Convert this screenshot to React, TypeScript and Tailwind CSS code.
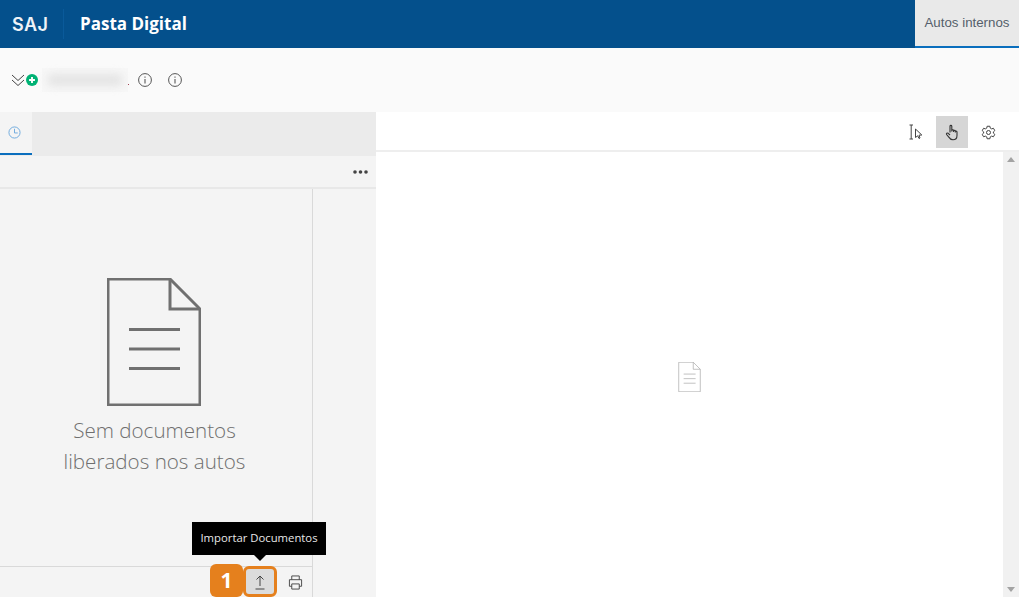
import React from "react";

function DocIcon({ className, sw, color }: { className: string; sw: number; color: string }) {
  return (
    <svg viewBox="0 0 94 128" className={className} fill="none" stroke={color} strokeWidth={sw}>
      <path d="M1 1 H63 L93 31 V127 H1 Z" strokeLinejoin="miter" />
      <path d="M63 1 V31 H93" />
      <path d="M22 51.5 H73 M22 71 H73 M22 90.5 H73" />
    </svg>
  );
}

function Info({ className }: { className?: string }) {
  return (
    <svg viewBox="0 0 14 14" className={className} fill="none" stroke="#555" strokeWidth="1">
      <circle cx="7" cy="7" r="6.4" />
      <path d="M7 6 V10.4" stroke="#666" strokeWidth="1.2" />
      <path d="M7 3.5 V4.8" stroke="#666" strokeWidth="1.2" />
    </svg>
  );
}

export default function App() {
  return (
    <div className="relative flex h-[597px] w-[1019px] flex-col overflow-hidden bg-white font-['Open_Sans','Noto_Sans',sans-serif]">
      <header className="flex h-12 items-stretch bg-[#04508c]">
        <div className="flex items-center pl-3 pr-[15px]">
          <span className="w-9 font-['Inter',sans-serif] text-[18px] font-semibold tracking-[0.4px] text-[#eef3f8]">SAJ</span>
        </div>
        <div className="my-[9px] w-px bg-[#0a5a9a]" />
        <div className="flex flex-1 items-center pl-4 pb-px">
          <span className="text-[17px] font-bold text-white">Pasta Digital</span>
        </div>
        <div className="flex w-[104px] items-center justify-center border-b-2 border-[#0a6ebd] bg-[#e9e9e9] font-['Liberation_Sans',sans-serif] text-[13.3px] text-[#555f6b]">
          Autos internos
        </div>
      </header>

      <div className="flex h-16 items-center bg-[#fafafa] pl-[11px]">
        <svg viewBox="0 0 14 14" className="h-[14px] w-[14px]" fill="none" stroke="#444" strokeWidth="1">
          <path d="M1 2 L7 7.5 L13 2 M1 7 L7 12.5 L13 7" />
        </svg>
        <svg viewBox="0 0 14 14" className="ml-px h-3 w-3">
          <circle cx="7" cy="7" r="7" fill="#00b274" />
          <path d="M7 3.6 V10.4 M3.6 7 H10.4" stroke="#fff" strokeWidth="2.2" />
        </svg>
        <div className="ml-1 flex h-6 w-[86px] items-center justify-center bg-[#f7f7f7]">
          <div className="h-[12px] w-[76px] rounded-full bg-[#e4e4e4] blur-[4px]" />
        </div>
        <span className="mt-2 h-px w-px self-center bg-[#a04050]" />
        <Info className="ml-[9px] h-[14px] w-[14px]" />
        <Info className="ml-4 h-[14px] w-[14px]" />
      </div>

      <div className="flex min-h-0 flex-1">
        <section className="flex w-[376px] flex-col bg-[#f4f4f4]">
          <div className="flex h-11 bg-[#ebebeb] pb-px">
            <div className="flex w-8 items-center justify-center border-b-2 border-[#0a6ebd] bg-[#f4f4f4] pr-1">
              <svg viewBox="0 0 14 14" className="h-[13px] w-[13px]" fill="none" stroke="#6aa8dc" strokeWidth="1">
                <circle cx="7" cy="7" r="6" />
                <path d="M7 3 V7.5 H10.5" />
              </svg>
            </div>
          </div>
          <div className="flex h-[33px] items-center justify-end border-b-2 border-[#e8e8e8] pr-2">
            <svg viewBox="0 0 15 4" className="h-1 w-[15px]" fill="#444">
              <circle cx="2" cy="2" r="1.8" />
              <circle cx="7.5" cy="2" r="1.8" />
              <circle cx="13" cy="2" r="1.8" />
            </svg>
          </div>
          <div className="flex min-h-0 flex-1">
            <div className="flex flex-1 flex-col items-center border-r border-[#d9d9d9] pt-[89px]">
              <DocIcon className="ml-[-4px] h-[128px] w-[94px]" sw={3} color="#707070" />
              <p className="mr-[3px] mt-[9px] text-center text-[20.6px] font-light leading-[31px] text-[#6f6f6f]">
                Sem documentos
                <br />
                liberados nos autos
              </p>
            </div>
            <div className="w-[63px]" />
          </div>
          <div className="flex h-[31px] w-[313px] items-center justify-end border-t border-r border-[#d9d9d9]">
            <div className="mr-[11px] flex h-[31px] w-[34px] items-center justify-center self-end rounded-[6px] border-[3px] border-[#e5801d] bg-[#dcdcdc]">
              <svg viewBox="0 0 14 16" className="h-4 w-[14px]" fill="none" stroke="#444" strokeWidth="1">
                <path d="M7 12 V2 M3.5 5.5 L7 2 L10.5 5.5 M2.5 15 H11.5" />
              </svg>
            </div>
            <svg viewBox="0 0 16 16" className="mr-[9px] h-[15px] w-[15px]" fill="none" stroke="#444" strokeWidth="1">
              <path d="M4 5 V1 H12 V5 M4 12 H1.5 V5 H14.5 V12 H12" />
              <path d="M4 9.5 H12 V15 H4 Z" />
            </svg>
          </div>
        </section>

        <section className="flex min-w-0 flex-1 flex-col">
          <div className="flex h-10 items-start justify-end border-b-2 border-[#eeeeee] pr-[10px]">
            <div className="mr-1 mt-1 flex h-8 w-8 items-center justify-center">
              <svg viewBox="0 0 16 16" className="h-4 w-4" fill="none" stroke="#444" strokeWidth="1">
                <path d="M1.5 1 H5 M3.2 1 V15 M1.5 15 H5" />
                <path d="M7.5 5 V13.5 L9.7 11.8 L11 14.5 L12 14 L11 11.2 L13.8 11 Z" />
              </svg>
            </div>
            <div className="mt-1 flex h-8 w-8 items-center justify-center bg-[#d6d6d6]">
              <svg viewBox="0 0 16 16" className="h-[17px] w-4" fill="none" stroke="#333" strokeWidth="1.1">
                <path d="M6 8 V1.8 C6 0.6 7.8 0.6 7.8 1.8 V7 M7.8 6 C7.8 5 9.6 5 9.6 6 V7.5 M9.6 6.5 C9.6 5.5 11.3 5.5 11.3 6.5 V8 M11.3 7 C11.3 6.2 13 6.2 13 7.4 V11 C13 13.5 11.5 15.3 9 15.3 C6.8 15.3 5.8 14.2 4.8 12.6 L2.6 10 C2 9 3.2 8 4.2 8.8 L6 10.5" />
              </svg>
            </div>
            <div className="mt-1 flex h-8 w-[41px] items-center justify-center">
              <svg viewBox="0 0 24 24" className="h-[15px] w-[15px]" fill="none" stroke="#444" strokeWidth="1.6" strokeLinejoin="round">
                <circle cx="12" cy="12" r="3.2" />
                <path d="M9.8 2 H14.2 L14.8 5 L17 6.2 L19.9 5.2 L22.1 9 L19.8 11 V13 L22.1 15 L19.9 18.8 L17 17.8 L14.8 19 L14.2 22 H9.8 L9.2 19 L7 17.8 L4.1 18.8 L1.9 15 L4.2 13 V11 L1.9 9 L4.1 5.2 L7 6.2 L9.2 5 Z" />
              </svg>
            </div>
          </div>
          <div className="flex min-h-0 flex-1">
            <div className="flex flex-1 items-start justify-center pt-[210px]">
              <DocIcon className="ml-[-1px] h-[30px] w-[23px]" sw={3} color="#a8a8a8" />
            </div>
            <div className="flex w-4 flex-col items-center justify-between bg-[#f1f1f1] py-[5px]">
              <span className="h-0 w-0 border-x-4 border-b-[5px] border-x-transparent border-b-[#a3a3a3]" />
              <span className="h-0 w-0 border-x-4 border-t-[5px] border-x-transparent border-t-[#a3a3a3]" />
            </div>
          </div>
        </section>
      </div>

      <div className="absolute left-[192px] top-[522px] flex h-[33px] w-[134px] items-center justify-center bg-black text-[11.3px] text-[#e8e8e8]">
        Importar Documentos
        <span className="absolute left-[62px] top-[33px] h-0 w-0 border-x-[6px] border-t-[6px] border-x-transparent border-t-black" />
      </div>
      <div className="absolute left-[210px] top-[564px] flex h-[33px] w-[33px] items-center justify-center rounded-[6px] bg-[#e5801d] text-[21px] font-bold text-white">
        1
      </div>
    </div>
  );
}
